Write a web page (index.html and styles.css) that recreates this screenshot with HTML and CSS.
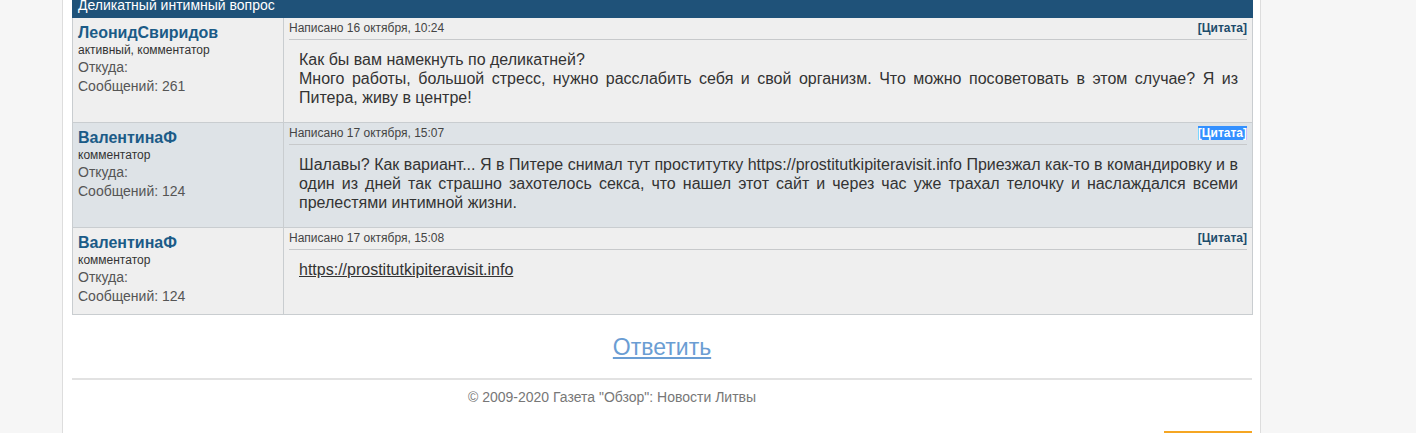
FILE: index.html
```html
<!DOCTYPE html>
<html lang="ru">
<head>
<meta charset="utf-8">
<title>Деликатный интимный вопрос</title>
<link rel="stylesheet" href="styles.css">
</head>
<body>
<div class="page">
  <div class="content">
    <table class="forum">
      <colgroup><col class="col-author"><col class="col-message"></colgroup>
      <tr class="head-row"><td colspan="2" class="topic-title">Деликатный интимный вопрос</td></tr>
      <tr class="post row-a">
        <td class="author">
          <div class="name">ЛеонидСвиридов</div>
          <div class="rank">активный, комментатор</div>
          <div class="info">Откуда:</div>
          <div class="info">Сообщений: 261</div>
        </td>
        <td class="message">
          <div class="meta"><span>Написано 16 октября, 10:24</span><a class="quote" href="#">[Цитата]</a></div>
          <div class="body">Как бы вам намекнуть по деликатней?<br>Много работы, большой стресс, нужно расслабить себя и свой организм. Что можно посоветовать в этом случае? Я из Питера, живу в центре!</div>
        </td>
      </tr>
      <tr class="post row-b">
        <td class="author">
          <div class="name">ВалентинаФ</div>
          <div class="rank">комментатор</div>
          <div class="info">Откуда:</div>
          <div class="info">Сообщений: 124</div>
        </td>
        <td class="message">
          <div class="meta"><span>Написано 17 октября, 15:07</span><a class="quote selected" href="#">[Цитата]</a></div>
          <div class="body">Шалавы? Как вариант... Я в Питере снимал тут проститутку https://prostitutkipiteravisit.info Приезжал как-то в командировку и в один из дней так страшно захотелось секса, что нашел этот сайт и через час уже трахал телочку и наслаждался всеми прелестями интимной жизни.</div>
        </td>
      </tr>
      <tr class="post row-a">
        <td class="author">
          <div class="name">ВалентинаФ</div>
          <div class="rank">комментатор</div>
          <div class="info">Откуда:</div>
          <div class="info">Сообщений: 124</div>
        </td>
        <td class="message">
          <div class="meta"><span>Написано 17 октября, 15:08</span><a class="quote" href="#">[Цитата]</a></div>
          <div class="body"><a class="link" href="#">https://prostitutkipiteravisit.info</a></div>
        </td>
      </tr>
    </table>
    <div class="reply"><a href="#">Ответить</a></div>
    <div class="footer">
      <div class="copy">© 2009-2020 Газета "Обзор": Новости Литвы</div>
      <div class="footer-btn"></div>
    </div>
  </div>
</div>
</body>
</html>
```

FILE: styles.css
```css
html, body {
  margin: 0;
  padding: 0;
  background: #f6f6f6;
  font-family: "Liberation Sans", Arial, sans-serif;
  color: #333;
  overflow: hidden;
}
.page {
  margin-top: -11px;
  padding-left: 62px;
}
.content {
  width: 1180px;
  background: #fff;
  border-left: 1px solid #ddd;
  border-right: 1px solid #ddd;
  padding: 0 8px 0 9px;
  min-height: 460px;
}
.forum {
  width: 1181px;
  border-collapse: collapse;
  table-layout: fixed;
}
.col-author { width: 211px; }
.forum td {
  padding: 0;
  vertical-align: top;
}
.topic-title {
  background: #1f5279;
  color: #fff;
  font-size: 14px;
  line-height: 16px;
  height: 28px;
  box-sizing: border-box;
  padding: 7px 5px 0 !important;
  border: 1px solid #1f5279;
}
.post td {
  border: 1px solid #c9cdd0;
}
.row-a { background: #efefef; }
.row-b { background: #dee3e7; }
.author {
  padding: 5px 5px 8px 5px !important;
}
.name {
  font-size: 16px;
  font-weight: bold;
  color: #1b5b87;
  line-height: 20px;
}
.rank {
  font-size: 12px;
  line-height: 15px;
  color: #333;
}
.info {
  font-size: 14px;
  line-height: 19px;
  color: #555;
}
.message {
  padding: 3px 5px 0 5px !important;
}
.meta {
  display: flex;
  justify-content: space-between;
  font-size: 12px;
  line-height: 14px;
  color: #444;
  padding-bottom: 4px;
  border-bottom: 1px solid #c7c9cb;
}
.quote {
  font-weight: bold;
  color: #1d4c6b;
  text-decoration: none;
}
.quote.selected {
  background: #3390ff;
  color: #fff;
}
.body {
  font-size: 16px;
  line-height: 19px;
  text-align: justify;
  color: #333;
  padding: 10px 9px 15px 10px;
}
.link {
  color: #333;
  text-decoration: underline;
}
.reply {
  text-align: center;
  padding: 18px 0 17px;
  font-size: 23px;
  line-height: 28px;
}
.reply a {
  color: #6a9dd3;
  text-decoration: underline;
}
.footer {
  border-top: 2px solid #e2e2e2;
  padding-top: 8px;
  display: flex;
  flex-direction: column;
}
.copy {
  text-align: center;
  font-size: 14px;
  line-height: 18px;
  color: #777;
  padding-right: 100px;
}
.footer-btn {
  align-self: flex-end;
  width: 88px;
  height: 10px;
  margin-top: 25px;
  border-top: 2px solid #f5a623;
}
```
